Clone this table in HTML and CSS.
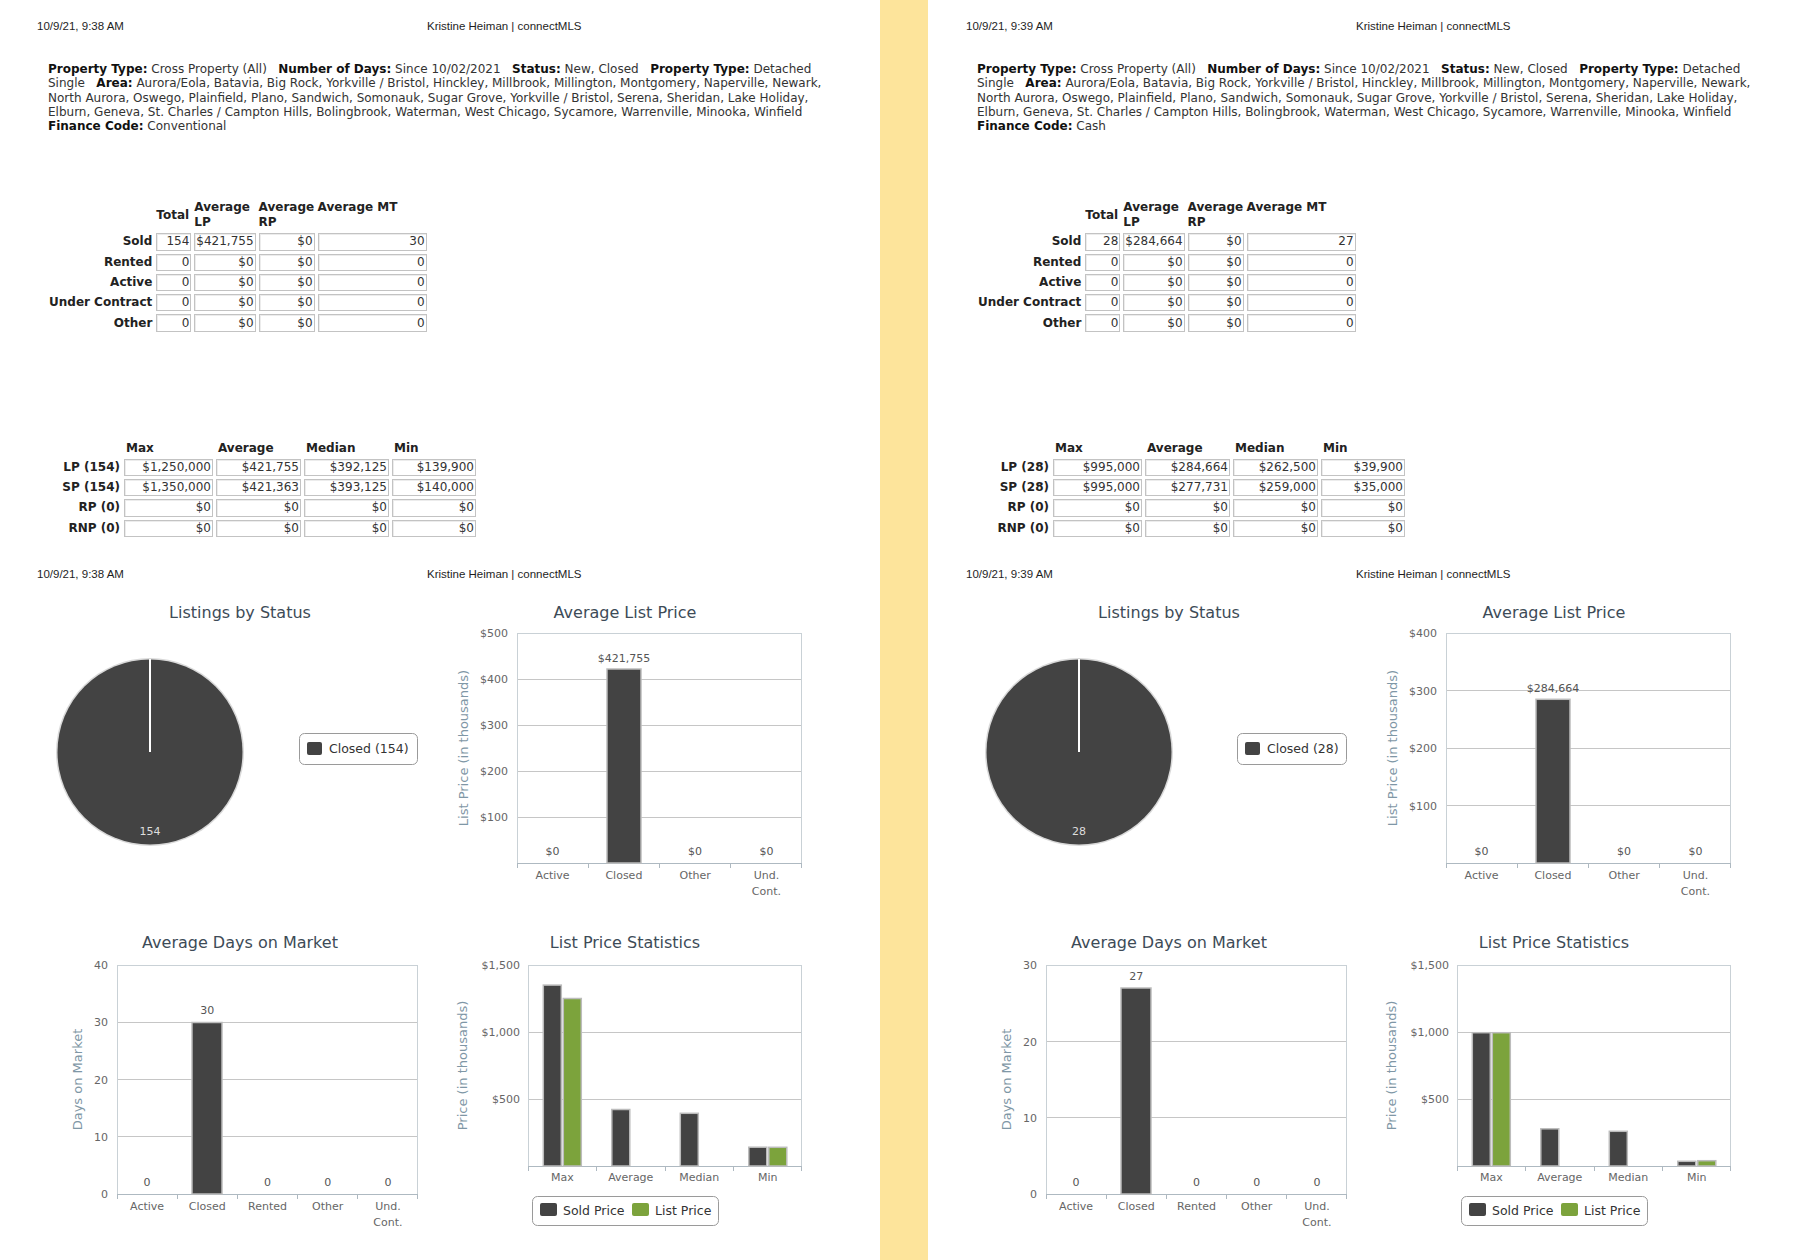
FILE: index.html
```html
<!DOCTYPE html>
<html lang="en">
<head>
<meta charset="utf-8">
<title>connectMLS statistics</title>
<link rel="stylesheet" href="styles.css">
</head>
<body>

<section class="page">
  <header class="print-head">
    <span class="stamp">10/9/21, 9:38 AM</span>
    <span class="site">Kristine Heiman | connectMLS</span>
  </header>
  <p class="filters">
    <b>Property Type:</b> Cross Property (All)&nbsp;&nbsp; <b>Number of Days:</b> Since 10/02/2021&nbsp;&nbsp; <b>Status:</b> New, Closed&nbsp;&nbsp; <b>Property Type:</b> Detached<br>
    Single&nbsp;&nbsp; <b>Area:</b> Aurora/Eola, Batavia, Big Rock, Yorkville / Bristol, Hinckley, Millbrook, Millington, Montgomery, Naperville, Newark,<br>
    North Aurora, Oswego, Plainfield, Plano, Sandwich, Somonauk, Sugar Grove, Yorkville / Bristol, Serena, Sheridan, Lake Holiday,<br>
    Elburn, Geneva, St. Charles / Campton Hills, Bolingbrook, Waterman, West Chicago, Sycamore, Warrenville, Minooka, Winfield<br>
    <b>Finance Code:</b> Conventional
  </p>

  <table class="stats stats--status">
    <thead>
      <tr><th class="rowhead"></th><th class="c-total">Total</th><th class="c-lp">Average LP</th><th class="c-rp">Average RP</th><th class="c-mt">Average MT</th></tr>
    </thead>
    <tbody>
      <tr><th class="rowhead">Sold</th><td>154</td><td>$421,755</td><td>$0</td><td>30</td></tr>
      <tr><th class="rowhead">Rented</th><td>0</td><td>$0</td><td>$0</td><td>0</td></tr>
      <tr><th class="rowhead">Active</th><td>0</td><td>$0</td><td>$0</td><td>0</td></tr>
      <tr><th class="rowhead">Under Contract</th><td>0</td><td>$0</td><td>$0</td><td>0</td></tr>
      <tr><th class="rowhead">Other</th><td>0</td><td>$0</td><td>$0</td><td>0</td></tr>
    </tbody>
  </table>

  <table class="stats stats--price">
    <thead>
      <tr><th class="rowhead"></th><th class="c-max">Max</th><th class="c-avg">Average</th><th class="c-med">Median</th><th class="c-min">Min</th></tr>
    </thead>
    <tbody>
      <tr><th class="rowhead">LP (154)</th><td>$1,250,000</td><td>$421,755</td><td>$392,125</td><td>$139,900</td></tr>
      <tr><th class="rowhead">SP (154)</th><td>$1,350,000</td><td>$421,363</td><td>$393,125</td><td>$140,000</td></tr>
      <tr><th class="rowhead">RP (0)</th><td>$0</td><td>$0</td><td>$0</td><td>$0</td></tr>
      <tr><th class="rowhead">RNP (0)</th><td>$0</td><td>$0</td><td>$0</td><td>$0</td></tr>
    </tbody>
  </table>

  <header class="print-head print-head--second">
    <span class="stamp">10/9/21, 9:38 AM</span>
    <span class="site">Kristine Heiman | connectMLS</span>
  </header>

  <div class="charts">
    <svg class="chart" width="400" height="330" viewBox="0 0 400 330">
      <text class="c-title" x="200" y="24">Listings by Status</text>
      <circle class="pie-rim" cx="110" cy="158" r="94"/>
      <circle class="pie-slice" cx="110" cy="158" r="92.5"/>
      <line class="pie-seam" x1="110" y1="65" x2="110" y2="158"/>
      <text class="pie-label" x="110" y="241">154</text>
      <rect class="legend-box" x="259.5" y="139.5" width="118" height="31" rx="5"/>
      <rect class="swatch-dark" x="267" y="148" width="15" height="13" rx="2"/>
      <text class="legend-text" x="289" y="159">Closed (154)</text>
    </svg>

    <svg class="chart" width="400" height="330" viewBox="0 0 400 330">
      <text class="c-title" x="185" y="24">Average List Price</text>
      <g class="grid">
        <line x1="77" y1="85.5" x2="362" y2="85.5"/>
        <line x1="77" y1="131.5" x2="362" y2="131.5"/>
        <line x1="77" y1="177.5" x2="362" y2="177.5"/>
        <line x1="77" y1="223.5" x2="362" y2="223.5"/>
      </g>
      <rect class="plot-frame" x="77.5" y="39.5" width="284" height="230"/>
      <line class="x-axis" x1="77" y1="269.5" x2="362" y2="269.5"/>
      <g class="ticks">
        <line x1="77.5" y1="269" x2="77.5" y2="274"/>
        <line x1="148.5" y1="269" x2="148.5" y2="274"/>
        <line x1="219.5" y1="269" x2="219.5" y2="274"/>
        <line x1="290.5" y1="269" x2="290.5" y2="274"/>
        <line x1="361.5" y1="269" x2="361.5" y2="274"/>
      </g>
      <g class="y-labels">
        <text x="68" y="43">$500</text>
        <text x="68" y="89">$400</text>
        <text x="68" y="135">$300</text>
        <text x="68" y="181">$200</text>
        <text x="68" y="227">$100</text>
      </g>
      <text class="y-title" transform="translate(28 154) rotate(-90)">List Price (in thousands)</text>
      <rect class="bar" x="167" y="75" width="34" height="194"/>
      <g class="data-labels">
        <text x="112.6" y="261">$0</text>
        <text x="183.9" y="68">$421,755</text>
        <text x="255.1" y="261">$0</text>
        <text x="326.4" y="261">$0</text>
      </g>
      <g class="x-labels">
        <text x="112.6" y="285">Active</text>
        <text x="183.9" y="285">Closed</text>
        <text x="255.1" y="285">Other</text>
        <text x="326.4" y="285">Und.</text>
        <text x="326.4" y="301">Cont.</text>
      </g>
    </svg>

    <svg class="chart" width="400" height="330" viewBox="0 0 400 330">
      <text class="c-title" x="200" y="24">Average Days on Market</text>
      <g class="grid">
        <line x1="77" y1="98.5" x2="378" y2="98.5"/>
        <line x1="77" y1="155.5" x2="378" y2="155.5"/>
        <line x1="77" y1="212.5" x2="378" y2="212.5"/>
      </g>
      <rect class="plot-frame" x="77.5" y="41.5" width="300" height="229"/>
      <line class="x-axis" x1="77" y1="270.5" x2="378" y2="270.5"/>
      <g class="ticks">
        <line x1="77.5" y1="270" x2="77.5" y2="275"/>
        <line x1="137.5" y1="270" x2="137.5" y2="275"/>
        <line x1="197.5" y1="270" x2="197.5" y2="275"/>
        <line x1="257.5" y1="270" x2="257.5" y2="275"/>
        <line x1="317.5" y1="270" x2="317.5" y2="275"/>
        <line x1="377.5" y1="270" x2="377.5" y2="275"/>
      </g>
      <g class="y-labels">
        <text x="68" y="45">40</text>
        <text x="68" y="102">30</text>
        <text x="68" y="159.5">20</text>
        <text x="68" y="217">10</text>
        <text x="68" y="274">0</text>
      </g>
      <text class="y-title" transform="translate(42 155.5) rotate(-90)">Days on Market</text>
      <rect class="bar" x="152" y="98.5" width="30" height="171.5"/>
      <g class="data-labels">
        <text x="107.1" y="262">0</text>
        <text x="167.3" y="90">30</text>
        <text x="227.5" y="262">0</text>
        <text x="287.7" y="262">0</text>
        <text x="347.9" y="262">0</text>
      </g>
      <g class="x-labels">
        <text x="107.1" y="286">Active</text>
        <text x="167.3" y="286">Closed</text>
        <text x="227.5" y="286">Rented</text>
        <text x="287.7" y="286">Other</text>
        <text x="347.9" y="286">Und.</text>
        <text x="347.9" y="302">Cont.</text>
      </g>
    </svg>

    <svg class="chart" width="400" height="330" viewBox="0 0 400 330">
      <text class="c-title" x="185" y="24">List Price Statistics</text>
      <g class="grid">
        <line x1="88" y1="108.5" x2="362" y2="108.5"/>
        <line x1="88" y1="175.5" x2="362" y2="175.5"/>
      </g>
      <rect class="plot-frame" x="88.5" y="41.5" width="273" height="201"/>
      <line class="x-axis" x1="88" y1="242.5" x2="362" y2="242.5"/>
      <g class="ticks">
        <line x1="88.5" y1="242" x2="88.5" y2="247"/>
        <line x1="156.5" y1="242" x2="156.5" y2="247"/>
        <line x1="225.5" y1="242" x2="225.5" y2="247"/>
        <line x1="293.5" y1="242" x2="293.5" y2="247"/>
        <line x1="361.5" y1="242" x2="361.5" y2="247"/>
      </g>
      <g class="y-labels">
        <text x="80" y="45">$1,500</text>
        <text x="80" y="112">$1,000</text>
        <text x="80" y="179">$500</text>
      </g>
      <text class="y-title" transform="translate(27 141.5) rotate(-90)">Price (in thousands)</text>
      <rect class="bar" x="103.3" y="61.1" width="18" height="180.9"/>
      <rect class="bar bar--list" x="123.3" y="74.5" width="18" height="167.5"/>
      <rect class="bar" x="171.8" y="185.5" width="18" height="56.5"/>
      <rect class="bar" x="240.3" y="189.3" width="18" height="52.7"/>
      <rect class="bar" x="308.8" y="223.2" width="18" height="18.8"/>
      <rect class="bar bar--list" x="328.8" y="223.3" width="18" height="18.7"/>
      <g class="x-labels">
        <text x="122.3" y="257">Max</text>
        <text x="190.8" y="257">Average</text>
        <text x="259.3" y="257">Median</text>
        <text x="327.8" y="257">Min</text>
      </g>
      <rect class="legend-box" x="92.5" y="272.5" width="186" height="29" rx="5"/>
      <rect class="swatch-dark" x="100" y="279" width="17" height="13" rx="2"/>
      <text class="legend-text" x="123" y="291">Sold Price</text>
      <rect class="swatch-green" x="192" y="279" width="17" height="13" rx="2"/>
      <text class="legend-text" x="215" y="291">List Price</text>
    </svg>
  </div>
</section>

<div class="gutter"></div>

<section class="page page--right">
  <header class="print-head">
    <span class="stamp">10/9/21, 9:39 AM</span>
    <span class="site">Kristine Heiman | connectMLS</span>
  </header>
  <p class="filters">
    <b>Property Type:</b> Cross Property (All)&nbsp;&nbsp; <b>Number of Days:</b> Since 10/02/2021&nbsp;&nbsp; <b>Status:</b> New, Closed&nbsp;&nbsp; <b>Property Type:</b> Detached<br>
    Single&nbsp;&nbsp; <b>Area:</b> Aurora/Eola, Batavia, Big Rock, Yorkville / Bristol, Hinckley, Millbrook, Millington, Montgomery, Naperville, Newark,<br>
    North Aurora, Oswego, Plainfield, Plano, Sandwich, Somonauk, Sugar Grove, Yorkville / Bristol, Serena, Sheridan, Lake Holiday,<br>
    Elburn, Geneva, St. Charles / Campton Hills, Bolingbrook, Waterman, West Chicago, Sycamore, Warrenville, Minooka, Winfield<br>
    <b>Finance Code:</b> Cash
  </p>

  <table class="stats stats--status">
    <thead>
      <tr><th class="rowhead"></th><th class="c-total">Total</th><th class="c-lp">Average LP</th><th class="c-rp">Average RP</th><th class="c-mt">Average MT</th></tr>
    </thead>
    <tbody>
      <tr><th class="rowhead">Sold</th><td>28</td><td>$284,664</td><td>$0</td><td>27</td></tr>
      <tr><th class="rowhead">Rented</th><td>0</td><td>$0</td><td>$0</td><td>0</td></tr>
      <tr><th class="rowhead">Active</th><td>0</td><td>$0</td><td>$0</td><td>0</td></tr>
      <tr><th class="rowhead">Under Contract</th><td>0</td><td>$0</td><td>$0</td><td>0</td></tr>
      <tr><th class="rowhead">Other</th><td>0</td><td>$0</td><td>$0</td><td>0</td></tr>
    </tbody>
  </table>

  <table class="stats stats--price">
    <thead>
      <tr><th class="rowhead"></th><th class="c-max">Max</th><th class="c-avg">Average</th><th class="c-med">Median</th><th class="c-min">Min</th></tr>
    </thead>
    <tbody>
      <tr><th class="rowhead">LP (28)</th><td>$995,000</td><td>$284,664</td><td>$262,500</td><td>$39,900</td></tr>
      <tr><th class="rowhead">SP (28)</th><td>$995,000</td><td>$277,731</td><td>$259,000</td><td>$35,000</td></tr>
      <tr><th class="rowhead">RP (0)</th><td>$0</td><td>$0</td><td>$0</td><td>$0</td></tr>
      <tr><th class="rowhead">RNP (0)</th><td>$0</td><td>$0</td><td>$0</td><td>$0</td></tr>
    </tbody>
  </table>

  <header class="print-head print-head--second">
    <span class="stamp">10/9/21, 9:39 AM</span>
    <span class="site">Kristine Heiman | connectMLS</span>
  </header>

  <div class="charts">
    <svg class="chart" width="400" height="330" viewBox="0 0 400 330">
      <text class="c-title" x="200" y="24">Listings by Status</text>
      <circle class="pie-rim" cx="110" cy="158" r="94"/>
      <circle class="pie-slice" cx="110" cy="158" r="92.5"/>
      <line class="pie-seam" x1="110" y1="65" x2="110" y2="158"/>
      <text class="pie-label" x="110" y="241">28</text>
      <rect class="legend-box" x="268.5" y="139.5" width="109" height="31" rx="5"/>
      <rect class="swatch-dark" x="276" y="148" width="15" height="13" rx="2"/>
      <text class="legend-text" x="298" y="159">Closed (28)</text>
    </svg>

    <svg class="chart" width="400" height="330" viewBox="0 0 400 330">
      <text class="c-title" x="185" y="24">Average List Price</text>
      <g class="grid">
        <line x1="77" y1="96.5" x2="362" y2="96.5"/>
        <line x1="77" y1="154.5" x2="362" y2="154.5"/>
        <line x1="77" y1="211.5" x2="362" y2="211.5"/>
      </g>
      <rect class="plot-frame" x="77.5" y="39.5" width="284" height="230"/>
      <line class="x-axis" x1="77" y1="269.5" x2="362" y2="269.5"/>
      <g class="ticks">
        <line x1="77.5" y1="269" x2="77.5" y2="274"/>
        <line x1="148.5" y1="269" x2="148.5" y2="274"/>
        <line x1="219.5" y1="269" x2="219.5" y2="274"/>
        <line x1="290.5" y1="269" x2="290.5" y2="274"/>
        <line x1="361.5" y1="269" x2="361.5" y2="274"/>
      </g>
      <g class="y-labels">
        <text x="68" y="43">$400</text>
        <text x="68" y="100.5">$300</text>
        <text x="68" y="158">$200</text>
        <text x="68" y="215.5">$100</text>
      </g>
      <text class="y-title" transform="translate(28 154) rotate(-90)">List Price (in thousands)</text>
      <rect class="bar" x="167" y="105.3" width="34" height="163.7"/>
      <g class="data-labels">
        <text x="112.6" y="261">$0</text>
        <text x="183.9" y="98">$284,664</text>
        <text x="255.1" y="261">$0</text>
        <text x="326.4" y="261">$0</text>
      </g>
      <g class="x-labels">
        <text x="112.6" y="285">Active</text>
        <text x="183.9" y="285">Closed</text>
        <text x="255.1" y="285">Other</text>
        <text x="326.4" y="285">Und.</text>
        <text x="326.4" y="301">Cont.</text>
      </g>
    </svg>

    <svg class="chart" width="400" height="330" viewBox="0 0 400 330">
      <text class="c-title" x="200" y="24">Average Days on Market</text>
      <g class="grid">
        <line x1="77" y1="117.5" x2="378" y2="117.5"/>
        <line x1="77" y1="193.5" x2="378" y2="193.5"/>
      </g>
      <rect class="plot-frame" x="77.5" y="41.5" width="300" height="229"/>
      <line class="x-axis" x1="77" y1="270.5" x2="378" y2="270.5"/>
      <g class="ticks">
        <line x1="77.5" y1="270" x2="77.5" y2="275"/>
        <line x1="137.5" y1="270" x2="137.5" y2="275"/>
        <line x1="197.5" y1="270" x2="197.5" y2="275"/>
        <line x1="257.5" y1="270" x2="257.5" y2="275"/>
        <line x1="317.5" y1="270" x2="317.5" y2="275"/>
        <line x1="377.5" y1="270" x2="377.5" y2="275"/>
      </g>
      <g class="y-labels">
        <text x="68" y="45">30</text>
        <text x="68" y="121.5">20</text>
        <text x="68" y="197.5">10</text>
        <text x="68" y="274">0</text>
      </g>
      <text class="y-title" transform="translate(42 155.5) rotate(-90)">Days on Market</text>
      <rect class="bar" x="152" y="64" width="30" height="206"/>
      <g class="data-labels">
        <text x="107.1" y="262">0</text>
        <text x="167.3" y="56">27</text>
        <text x="227.5" y="262">0</text>
        <text x="287.7" y="262">0</text>
        <text x="347.9" y="262">0</text>
      </g>
      <g class="x-labels">
        <text x="107.1" y="286">Active</text>
        <text x="167.3" y="286">Closed</text>
        <text x="227.5" y="286">Rented</text>
        <text x="287.7" y="286">Other</text>
        <text x="347.9" y="286">Und.</text>
        <text x="347.9" y="302">Cont.</text>
      </g>
    </svg>

    <svg class="chart" width="400" height="330" viewBox="0 0 400 330">
      <text class="c-title" x="185" y="24">List Price Statistics</text>
      <g class="grid">
        <line x1="88" y1="108.5" x2="362" y2="108.5"/>
        <line x1="88" y1="175.5" x2="362" y2="175.5"/>
      </g>
      <rect class="plot-frame" x="88.5" y="41.5" width="273" height="201"/>
      <line class="x-axis" x1="88" y1="242.5" x2="362" y2="242.5"/>
      <g class="ticks">
        <line x1="88.5" y1="242" x2="88.5" y2="247"/>
        <line x1="156.5" y1="242" x2="156.5" y2="247"/>
        <line x1="225.5" y1="242" x2="225.5" y2="247"/>
        <line x1="293.5" y1="242" x2="293.5" y2="247"/>
        <line x1="361.5" y1="242" x2="361.5" y2="247"/>
      </g>
      <g class="y-labels">
        <text x="80" y="45">$1,500</text>
        <text x="80" y="112">$1,000</text>
        <text x="80" y="179">$500</text>
      </g>
      <text class="y-title" transform="translate(27 141.5) rotate(-90)">Price (in thousands)</text>
      <rect class="bar" x="103.3" y="108.7" width="18" height="133.3"/>
      <rect class="bar bar--list" x="123.3" y="108.7" width="18" height="133.3"/>
      <rect class="bar" x="171.8" y="204.8" width="18" height="37.2"/>
      <rect class="bar" x="240.3" y="207.3" width="18" height="34.7"/>
      <rect class="bar" x="308.8" y="237.3" width="18" height="4.7"/>
      <rect class="bar bar--list" x="328.8" y="236.7" width="18" height="5.3"/>
      <g class="x-labels">
        <text x="122.3" y="257">Max</text>
        <text x="190.8" y="257">Average</text>
        <text x="259.3" y="257">Median</text>
        <text x="327.8" y="257">Min</text>
      </g>
      <rect class="legend-box" x="92.5" y="272.5" width="186" height="29" rx="5"/>
      <rect class="swatch-dark" x="100" y="279" width="17" height="13" rx="2"/>
      <text class="legend-text" x="123" y="291">Sold Price</text>
      <rect class="swatch-green" x="192" y="279" width="17" height="13" rx="2"/>
      <text class="legend-text" x="215" y="291">List Price</text>
    </svg>
  </div>
</section>

</body>
</html>
```

FILE: styles.css
```css
* {
  box-sizing: border-box;
}

html,
body {
  margin: 0;
  padding: 0;
  overflow: hidden;
  background: #ffffff;
}

body {
  width: 1800px;
  height: 1260px;
  display: flex;
  font-family: "Liberation Sans", Arial, sans-serif;
  color: #222222;
}

.page {
  flex: none;
  width: 880px;
  height: 1260px;
  padding-top: 19px;
}

.page--right {
  width: 871px;
  margin-left: 1px;
}

.gutter {
  flex: none;
  width: 48px;
  height: 1260px;
  background: #fde49b;
}

/* print header */
.print-head {
  display: flex;
  height: 14px;
  line-height: 14px;
  font-size: 11.5px;
  color: #1e1e1e;
  padding-left: 37px;
}

.print-head .stamp {
  width: 390px;
}

.print-head--second {
  margin-top: 27px;
}

/* filter summary */
.filters {
  margin: 29px 0 0 48px;
  font-family: "DejaVu Sans", Verdana, sans-serif;
  font-size: 12px;
  line-height: 14.25px;
  color: #333333;
  white-space: nowrap;
}

.filters b {
  color: #111111;
}

/* stat tables */
.stats {
  border-collapse: separate;
  border-spacing: 3px;
  font-family: "DejaVu Sans", Verdana, sans-serif;
  font-size: 12px;
  color: #222222;
}

.stats th {
  padding: 0;
  font-weight: bold;
  text-align: left;
  line-height: 15px;
}

.stats thead th {
  vertical-align: top;
}

.stats .rowhead {
  text-align: right;
  padding-right: 1px;
  white-space: nowrap;
  vertical-align: middle;
}

.stats td {
  height: 17.3px;
  padding: 0 1px 0 1px;
  line-height: 15px;
  text-align: right;
  color: #333333;
  border: 1px solid #c3c3c3;
  box-shadow: inset 1px 1px 0 #ececec;
  white-space: nowrap;
}

.stats--status {
  margin: 64px 0 0 46px;
}

.stats--status .rowhead {
  width: 104px;
}

.stats--status thead th.c-total {
  vertical-align: middle;
}

.c-total { width: 35px; }
.c-lp { width: 61px; }
.c-rp { width: 56px; }
.c-mt { width: 109px; }

.stats--price {
  margin: 102px 0 0 48px;
}

.stats--price .rowhead {
  width: 70px;
}

.stats--price thead th {
  line-height: 16px;
  padding-left: 2px;
}

.stats--price thead th.rowhead {
  padding-left: 0;
}

.c-max { width: 89px; }
.c-avg { width: 85px; }
.c-med { width: 85px; }
.c-min { width: 84px; }

/* charts */
.charts {
  margin-top: 13px;
  padding-left: 40px;
  display: grid;
  grid-template-columns: 400px 400px;
}

.chart {
  display: block;
  font-family: "DejaVu Sans", Verdana, sans-serif;
}

.c-title {
  font-size: 16px;
  fill: #3d4b57;
  text-anchor: middle;
}

.grid line {
  stroke: #c6c6c6;
  stroke-width: 1;
}

.plot-frame {
  fill: none;
  stroke: #c9d1d6;
  stroke-width: 1;
}

.x-axis {
  stroke: #aeb9c1;
  stroke-width: 1;
}

.ticks line {
  stroke: #aeb9c1;
  stroke-width: 1;
}

.y-labels text {
  font-size: 11px;
  fill: #666666;
  text-anchor: end;
}

.x-labels text {
  font-size: 11px;
  fill: #666666;
  text-anchor: middle;
}

.y-title {
  font-size: 13px;
  fill: #7f97a6;
  text-anchor: middle;
}

.data-labels text {
  font-size: 11px;
  fill: #555555;
  text-anchor: middle;
}

.bar {
  fill: #434343;
  stroke: #bcbcbc;
  stroke-width: 1.5;
}

.bar--list {
  fill: #7ca33c;
}

.pie-rim {
  fill: #d9d9d9;
}

.pie-slice {
  fill: #434343;
}

.pie-seam {
  stroke: #ffffff;
  stroke-width: 2;
}

.pie-label {
  font-size: 11px;
  fill: #dddddd;
  text-anchor: middle;
}

.legend-box {
  fill: #ffffff;
  stroke: #9a9a9a;
  stroke-width: 1;
}

.swatch-dark {
  fill: #434343;
}

.swatch-green {
  fill: #7ca33c;
}

.legend-text {
  font-size: 12.5px;
  fill: #333333;
}
```
